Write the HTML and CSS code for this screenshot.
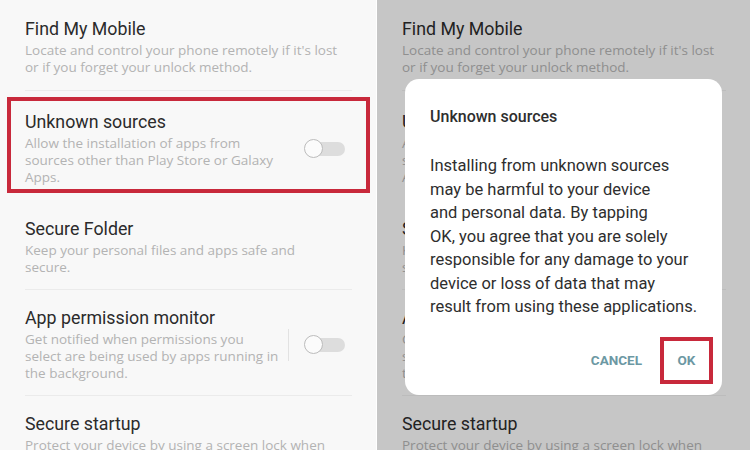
FILE: index.html
```html
<!DOCTYPE html>
<html lang="en">
<head>
    <meta charset="UTF-8">
    <meta name="viewport" content="width=device-width, initial-scale=1.0">
    <title>Unknown sources</title>
    <link rel="stylesheet" href="styles.css">
</head>
<body>
    <div class="panel">
        <div class="list">
            <div class="item">
                <div class="text">
                    <div class="title">Find My Mobile</div>
                    <div class="sub">Locate and control your phone remotely if it's lost<br>or if you forget your unlock method.</div>
                </div>
            </div>
            <div class="item marked">
                <div class="text narrow">
                    <div class="title">Unknown sources</div>
                    <div class="sub">Allow the installation of apps from<br>sources other than Play Store or Galaxy<br>Apps.</div>
                </div>
                <div class="switch"><div class="knob"></div></div>
            </div>
            <div class="item">
                <div class="text">
                    <div class="title">Secure Folder</div>
                    <div class="sub">Keep your personal files and apps safe and<br>secure.</div>
                </div>
            </div>
            <div class="item">
                <div class="text narrow">
                    <div class="title">App permission monitor</div>
                    <div class="sub">Get notified when permissions you<br>select are being used by apps running in<br>the background.</div>
                </div>
                <div class="vline"></div>
                <div class="switch"><div class="knob"></div></div>
            </div>
            <div class="item">
                <div class="text">
                    <div class="title">Secure startup</div>
                    <div class="sub">Protect your device by using a screen lock when<br>your device turns on.</div>
                </div>
            </div>
        </div>
    </div>

    <div class="panel dimmed">
        <div class="list">
            <div class="item">
                <div class="text">
                    <div class="title">Find My Mobile</div>
                    <div class="sub">Locate and control your phone remotely if it's lost<br>or if you forget your unlock method.</div>
                </div>
            </div>
            <div class="item marked">
                <div class="text narrow">
                    <div class="title">Unknown sources</div>
                    <div class="sub">Allow the installation of apps from<br>sources other than Play Store or Galaxy<br>Apps.</div>
                </div>
                <div class="switch"><div class="knob"></div></div>
            </div>
            <div class="item">
                <div class="text">
                    <div class="title">Secure Folder</div>
                    <div class="sub">Keep your personal files and apps safe and<br>secure.</div>
                </div>
            </div>
            <div class="item">
                <div class="text narrow">
                    <div class="title">App permission monitor</div>
                    <div class="sub">Get notified when permissions you<br>select are being used by apps running in<br>the background.</div>
                </div>
                <div class="vline"></div>
                <div class="switch"><div class="knob"></div></div>
            </div>
            <div class="item">
                <div class="text">
                    <div class="title">Secure startup</div>
                    <div class="sub">Protect your device by using a screen lock when<br>your device turns on.</div>
                </div>
            </div>
        </div>

        <div class="dialog">
            <div class="dialog-title">Unknown sources</div>
            <p class="dialog-body">Installing from unknown sources<br>may be harmful to your device<br>and personal data. By tapping<br>OK, you agree that you are solely<br>responsible for any damage to your<br>device or loss of data that may<br>result from using these applications.</p>
            <div class="dialog-actions">
                <button class="btn">CANCEL</button>
                <button class="btn marked-btn">OK</button>
            </div>
        </div>
    </div>
</body>
</html>
```

FILE: styles.css
```css
body {
    margin: 0;
    font-family: Roboto, "Liberation Sans", Arial, sans-serif;
    background: #ffffff;
    display: flex;
    gap: 1px;
    width: 750px;
    height: 450px;
    overflow: hidden;
}

.panel {
    position: relative;
    width: 376px;
    height: 450px;
    overflow: hidden;
    background: #f8f8f8;
}

.panel.dimmed {
    flex: 1;
}

/* scrim behind the dialog */
.panel.dimmed::after {
    content: "";
    position: absolute;
    inset: 0;
    background: rgba(0, 0, 0, 0.2);
}

.list {
    padding: 0 24px 0 25px;
}

.item {
    display: flex;
    align-items: center;
    padding: 17px 0 13px;
    border-bottom: 1px solid #ebebeb;
}

.item:first-child {
    padding: 18px 0 14px;
}

.item.marked {
    margin: 6px -18px 8px;
    padding: 10px 14px 3px;
    border: 4px solid #c8293b;
}

.dimmed .item.marked {
    border-color: transparent;
}

.text {
    flex: 1;
    white-space: nowrap;
}

.text.narrow {
    flex: 0 0 250px;
}

.title {
    font-size: 17.8px;
    line-height: 22px;
    color: #2b2b2b;
}

.sub {
    margin-top: 2px;
    font-family: "Open Sans", Roboto, sans-serif;
    font-size: 13.5px;
    line-height: 17px;
    color: #b3b3b3;
}

.vline {
    width: 1px;
    height: 32px;
    margin-left: auto;
    background: #e2e2e2;
}

.switch {
    width: 40px;
    height: 14px;
    margin-left: auto;
    margin-right: 7px;
    border-radius: 7px;
    background: #dddddd;
    display: flex;
    align-items: center;
}

.vline + .switch {
    margin-left: 16px;
}

.knob {
    width: 19px;
    height: 19px;
    margin-left: -1px;
    box-sizing: border-box;
    border-radius: 50%;
    border: 1.5px solid #bcbcbc;
    background: #fbfbfb;
}

.dialog {
    position: absolute;
    left: 28px;
    top: 79px;
    z-index: 2;
    width: 317px;
    height: 316px;
    box-sizing: border-box;
    padding: 27px 9px 0 25px;
    background: #ffffff;
    border-radius: 14px;
}

.dialog-title {
    font-size: 16px;
    line-height: 22px;
    font-weight: 500;
    color: #2e2e2e;
}

.dialog-body {
    margin: 26px 0 0;
    font-size: 16.5px;
    line-height: 23.5px;
    color: #2e2e2e;
    white-space: nowrap;
}

.dialog-actions {
    display: flex;
    justify-content: flex-end;
    margin-top: 18px;
}

.btn {
    height: 47px;
    padding: 0 18px;
    border: none;
    background: none;
    font-family: inherit;
    font-size: 13.5px;
    font-weight: 700;
    color: #6c98a3;
}

.marked-btn {
    width: 53px;
    padding: 0;
    border: 4px solid #c8293b;
}
```
